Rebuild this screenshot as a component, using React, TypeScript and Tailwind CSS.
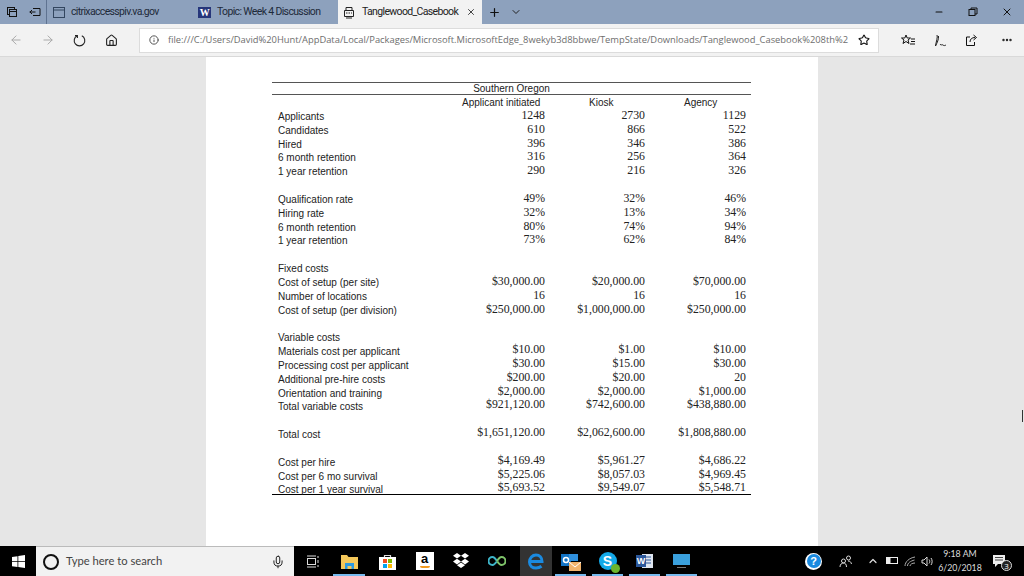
import { ArrowLeft, ArrowRight, Home, Info, Star, MoreHorizontal, Plus, ChevronDown, X, Minus, Mic, ChevronUp } from "lucide-react";
import type { ReactNode } from "react";

type Row = { label?: string; a?: string; b?: string; c?: string };

const rows: Row[] = [
  { label: "Applicants", a: "1248", b: "2730", c: "1129" },
  { label: "Candidates", a: "610", b: "866", c: "522" },
  { label: "Hired", a: "396", b: "346", c: "386" },
  { label: "6 month retention", a: "316", b: "256", c: "364" },
  { label: "1 year retention", a: "290", b: "216", c: "326" },
  {},
  { label: "Qualification rate", a: "49%", b: "32%", c: "46%" },
  { label: "Hiring rate", a: "32%", b: "13%", c: "34%" },
  { label: "6 month retention", a: "80%", b: "74%", c: "94%" },
  { label: "1 year retention", a: "73%", b: "62%", c: "84%" },
  {},
  { label: "Fixed costs" },
  { label: "Cost of setup (per site)", a: "$30,000.00", b: "$20,000.00", c: "$70,000.00" },
  { label: "Number of locations", a: "16", b: "16", c: "16" },
  { label: "Cost of setup (per division)", a: "$250,000.00", b: "$1,000,000.00", c: "$250,000.00" },
  {},
  { label: "Variable costs" },
  { label: "Materials cost per applicant", a: "$10.00", b: "$1.00", c: "$10.00" },
  { label: "Processing cost per applicant", a: "$30.00", b: "$15.00", c: "$30.00" },
  { label: "Additional pre-hire costs", a: "$200.00", b: "$20.00", c: "20" },
  { label: "Orientation and training", a: "$2,000.00", b: "$2,000.00", c: "$1,000.00" },
  { label: "Total variable costs", a: "$921,120.00", b: "$742,600.00", c: "$438,880.00" },
  {},
  { label: "Total cost", a: "$1,651,120.00", b: "$2,062,600.00", c: "$1,808,880.00" },
  {},
  { label: "Cost per hire", a: "$4,169.49", b: "$5,961.27", c: "$4,686.22" },
  { label: "Cost per 6 mo survival", a: "$5,225.06", b: "$8,057.03", c: "$4,969.45" },
  { label: "Cost per 1 year survival", a: "$5,693.52", b: "$9,549.07", c: "$5,548.71" },
];

function TabIcon() {
  return (
    <svg width="12" height="11" viewBox="0 0 12 11" fill="none" stroke="#33465f" strokeWidth="1">
      <rect x="0.5" y="0.5" width="11" height="10" />
      <path d="M0.5 3h11" />
    </svg>
  );
}

function TabBar() {
  return (
    <div className="flex h-6 items-center bg-[#8da1bd] font-['Roboto'] text-[10.5px] tracking-[-0.65px] whitespace-nowrap text-[#1e2a3a]">
      <div className="flex h-6 w-[47px] shrink-0 items-center border-r border-[#5f7391]">
        <svg className="ml-[6px]" width="12" height="12" viewBox="0 0 12 12" fill="none" stroke="#111" strokeWidth="1">
          <rect x="1.5" y="1.5" width="7" height="7" />
          <rect x="3.5" y="3.5" width="7" height="7" fill="#8da1bd" />
          <path d="M3.5 5.5h7" />
        </svg>
        <svg className="ml-[11px]" width="12" height="12" viewBox="0 0 12 12" fill="none" stroke="#111" strokeWidth="1">
          <path d="M4 2.5h7v7H4M0.5 6h6M3 4L1 6l2 2" />
        </svg>
      </div>
      <div className="flex w-[146px] shrink-0 items-center pl-[6px]">
        <TabIcon />
        <span className="ml-[6px]">citrixaccesspiv.va.gov</span>
      </div>
      <div className="flex w-[145px] shrink-0 items-center pl-[5px]">
        <span className="flex h-[11px] w-[13px] items-center justify-center bg-[#26367a] font-['Liberation_Serif'] text-[10px] font-bold text-white">W</span>
        <span className="ml-[6px]">Topic: Week 4 Discussion</span>
      </div>
      <div className="flex h-6 w-[144px] shrink-0 items-center bg-[#f2f2f2] pl-[5px] text-[#222]">
        <svg className="shrink-0" width="12" height="13" viewBox="0 0 12 13" fill="none" stroke="#222" strokeWidth="1">
          <path d="M3 4V1.500h6V4M1.500 4.500h9v6h-9zM3 12h6" />
          <path d="M3 7h1.500M5.500 7H7M8 7h1" />
        </svg>
        <span className="ml-[7px] w-[104px]">Tanglewood_Casebook</span>
        <X className="shrink-0" size={10} strokeWidth={1} absoluteStrokeWidth color="#444" />
      </div>
      <Plus className="ml-[6px]" size={13} strokeWidth={1.2} absoluteStrokeWidth color="#111" />
      <ChevronDown className="ml-[9px]" size={12} strokeWidth={1} absoluteStrokeWidth color="#222" />
      <div className="ml-auto flex items-center pr-[11px]">
        <Minus size={10} strokeWidth={1.2} absoluteStrokeWidth color="#111" />
        <svg className="ml-[24px]" width="10" height="10" viewBox="0 0 10 10" fill="none" stroke="#111" strokeWidth="1">
          <rect x="1" y="2.500" width="6" height="6" />
          <path d="M3 2.500V1h6v6H7" />
        </svg>
        <X className="ml-[23px]" size={12} strokeWidth={1} absoluteStrokeWidth color="#111" />
      </div>
    </div>
  );
}

function ToolBar() {
  return (
    <div className="flex h-[33px] items-center border-b border-[#d9d9d9] bg-[#f2f2f2]">
      <ArrowLeft className="ml-[9px]" size={14} strokeWidth={1} absoluteStrokeWidth color="#aaa" />
      <ArrowRight className="ml-[18px]" size={14} strokeWidth={1} absoluteStrokeWidth color="#aaa" />
      <svg className="ml-[18px]" width="13" height="13" viewBox="0 0 13 13" fill="none" stroke="#222" strokeWidth="1.100">
        <path d="M4.200 1.800a5.300 5.300 0 1 0 4.600 0M2 1.500h2.400v2.400" />
      </svg>
      <Home className="ml-[19px]" size={13} strokeWidth={1.1} absoluteStrokeWidth color="#222" />
      <div className="ml-[21px] flex h-[25px] w-[740px] items-center border border-[#dcdcdc] bg-white pl-[9px]">
        <Info size={10} strokeWidth={1} absoluteStrokeWidth color="#555" />
        <span className="ml-[9px] w-[681px] font-['Open_Sans'] text-[9.35px] whitespace-nowrap text-[#6e6e6e]">
          file:///C:/Users/David%20Hunt/AppData/Local/Packages/Microsoft.MicrosoftEdge_8wekyb3d8bbwe/TempState/Downloads/Tanglewood_Casebook%208th%2
        </span>
        <Star className="ml-[9px]" size={12} strokeWidth={1.1} absoluteStrokeWidth color="#111" />
      </div>
      <svg className="ml-[22px]" width="14" height="12" viewBox="0 0 14 12" fill="none" stroke="#111" strokeWidth="1">
        <path d="M5 1l1.200 3H9.500L7 6l1 3.500L5 7.500 2 9.500 3 6 .5 4h3.300zM10 5h4M10 7.500h4M9 10h5" />
      </svg>
      <svg className="ml-[19px]" width="13" height="13" viewBox="0 0 13 13" fill="none" stroke="#222" strokeWidth="1">
        <path d="M3 1C4 3 2 8 1.500 12 3 9 5 5 4.500 2M6 10c1 2 2 0 3 1s2 .5 3 0" />
      </svg>
      <svg className="ml-[18px]" width="13" height="13" viewBox="0 0 13 13" fill="none" stroke="#111" strokeWidth="1">
        <path d="M5 3H1.500v8.500h8V8M5 8c0-3 2-4.500 5-4.500M8.500 1l3 2.500-3 2.500" />
      </svg>
      <MoreHorizontal className="ml-[23px]" size={12} strokeWidth={1.4} absoluteStrokeWidth color="#222" />
    </div>
  );
}

function Document() {
  const num = "text-right font-['Liberation_Serif'] text-[11.8px] leading-[14px] text-[#222]";
  return (
    <div className="flex h-[489px] justify-center overflow-hidden bg-[#e6e6e6]">
      <div className="w-[612px] bg-white pt-[25px] pl-[66px] font-['Liberation_Sans'] text-[10px] text-[#222]">
        <div className="w-[479px]">
          <div className="h-[13px] border-t border-b border-[#555] text-center leading-[12px]">Southern Oregon</div>
          <div className="flex h-[14px] leading-[15px]">
            <div className="w-[317px] pl-[190px]">Applicant initiated</div>
            <div className="w-[95px]">Kiosk</div>
            <div>Agency</div>
          </div>
          <div className="h-[386px] border-b border-black">
            {rows.map((r, i) => (
              <div key={i} className="grid h-[13.84px] grid-cols-[172px_101px_100px_101px] items-center">
                <div className="translate-y-[1px] pl-[6px] leading-[14px] whitespace-nowrap">{r.label}</div>
                <div className={`${num} ${i > 16 ? "-translate-y-[2px]" : "-translate-y-[1px]"}`}>{r.a}</div>
                <div className={`${num} ${i > 16 ? "-translate-y-[2px]" : "-translate-y-[1px]"}`}>{r.b}</div>
                <div className={`${num} ${i > 16 ? "-translate-y-[2px]" : "-translate-y-[1px]"}`}>{r.c}</div>
              </div>
            ))}
          </div>
        </div>
      </div>
    </div>
  );
}

function Slot({ className, active, children }: { className: string; active?: boolean; children: ReactNode }) {
  return (
    <div className={`relative flex h-[30px] shrink-0 items-center justify-center ${className}`}>
      {children}
      {active && <div className="absolute right-[3px] bottom-0 left-[3px] h-[2px] bg-[#76b9ed]" />}
    </div>
  );
}

function TaskBar() {
  return (
    <div className="flex h-[30px] items-center bg-black">
      <div className="flex w-[36px] justify-center">
        <svg width="13" height="13" viewBox="0 0 13 13" fill="#fff">
          <path d="M0 2l5.500-.8v5H0zM6.300 1.100L13 0v6.200H6.300zM0 7h5.500v5L0 11.200zM6.300 7H13v6l-6.700-1z" />
        </svg>
      </div>
      <div className="flex h-[30px] w-[258px] items-center border-t border-[#bbb] bg-[#f2f2f2]">
        <div className="ml-[7px] h-[16px] w-[16px] rounded-full border-[2px] border-[#111]" />
        <span className="ml-[7px] font-['Lato'] text-[11.2px] text-[#444]">Type here to search</span>
        <Mic className="mr-[9px] ml-auto" size={14} strokeWidth={1} absoluteStrokeWidth color="#222" />
      </div>
      <Slot className="w-[36px]">
        <svg width="13" height="13" viewBox="0 0 13 13" fill="none" stroke="#ddd" strokeWidth="1">
          <rect x="1.500" y="3.500" width="8" height="6" />
          <path d="M1 1h9M1 12h9M12 1v2M12 5v3M12 10v2" />
        </svg>
      </Slot>
      <Slot className="w-[38px]" active>
        <svg width="17" height="15" viewBox="0 0 17 15">
          <path d="M0 1h6l1.500 2H17v12H0z" fill="#f5c85a" />
          <path d="M4 9h9v6h-2.500v-3h-4v3H4z" fill="#2f9be0" />
        </svg>
      </Slot>
      <Slot className="w-[39px]">
        <svg width="17" height="17" viewBox="0 0 17 17">
          <path d="M5.500 4V2.500h6V4" fill="none" stroke="#ddd" strokeWidth="1.200" />
          <rect y="4" width="17" height="13" fill="#fff" />
          <rect x="4" y="6" width="4" height="4" fill="#f25022" />
          <rect x="9" y="6" width="4" height="4" fill="#7fba00" />
          <rect x="4" y="11" width="4" height="4" fill="#00a4ef" />
          <rect x="9" y="11" width="4" height="4" fill="#ffb900" />
        </svg>
      </Slot>
      <Slot className="w-[35px]">
        <div className="relative flex h-[18px] w-[18px] items-start justify-center bg-white font-['Liberation_Sans'] text-[13px] leading-[14px] font-bold text-black">
          a
          <div className="absolute bottom-[2px] left-[4px] h-[2px] w-[10px] rounded-b-full bg-[#f29a1f]" />
        </div>
      </Slot>
      <Slot className="w-[38px]">
        <svg width="18" height="16" viewBox="0 0 18 16" fill="#fff">
          <path d="M5 0l4 2.800L5 5.600 1 2.800zM13 0l4 2.800-4 2.800-4-2.800zM5 5.800l4 2.800-4 2.800-4-2.800zM13 5.800l4 2.800-4 2.800-4-2.800zM5 12.200l4-2.600 4 2.600-4 2.800z" />
        </svg>
      </Slot>
      <Slot className="w-[34px]">
        <svg width="18" height="10" viewBox="0 0 18 10" fill="none" strokeWidth="2">
          <path d="M9 5C7 2 6 1 4.500 1a4 4 0 000 8C6 9 7 8 9 5" stroke="#3eb5c9" />
          <path d="M9 5c2-3 3-4 4.500-4a4 4 0 010 8C12 9 11 8 9 5" stroke="#7fc46a" />
        </svg>
      </Slot>
      <Slot className="ml-[6px] w-[32px] bg-[#333]">
        <svg width="16" height="17" viewBox="0 0 16 17" fill="none">
          <path d="M2 8.500h12c0-4-2.500-6.500-6-6.500S1.500 5 1.500 9 4.500 15 8 15c2.200 0 4-.6 5.500-1.700" stroke="#1a8ae0" strokeWidth="3" />
        </svg>
      </Slot>
      <Slot className="w-[37px]" active>
        <svg width="20" height="19" viewBox="0 0 20 19">
          <rect y="2" width="10" height="12" fill="#1273c4" />
          <rect x="8" y="2" width="9" height="7" fill="#2f8fdc" />
          <path d="M8 10h12v9H8z" fill="#f1b36c" />
          <path d="M8 10l6 5 6-5" fill="none" stroke="#fff" strokeWidth="1" />
          <circle cx="5" cy="8" r="2.500" fill="none" stroke="#fff" strokeWidth="1.500" />
        </svg>
      </Slot>
      <Slot className="w-[37px]" active>
        <div className="relative h-[18px] w-[18px] rounded-full bg-[#13a9e8] text-center font-['Liberation_Sans'] text-[14px] leading-[18px] font-bold text-white">
          S
          <div className="absolute -right-[3px] -bottom-[3px] h-[9px] w-[9px] rounded-full bg-[#6cb52d]" />
        </div>
      </Slot>
      <Slot className="w-[37px]" active>
        <svg width="17" height="16" viewBox="0 0 17 16">
          <rect x="6" y="1" width="11" height="14" fill="#dfe6f0" />
          <path d="M9 4h6M9 7h6M9 10h6" stroke="#2b579a" strokeWidth="1" />
          <rect y="2" width="10" height="12" fill="#2b579a" />
          <text x="5" y="11" textAnchor="middle" fontSize="9" fontWeight="700" fill="#fff" fontFamily="Liberation Sans">W</text>
        </svg>
      </Slot>
      <Slot className="w-[37px]" active>
        <svg width="17" height="15" viewBox="0 0 17 15">
          <rect width="17" height="11" fill="#3aa0dd" />
          <rect x="4" y="13" width="9" height="1" fill="#777" />
        </svg>
      </Slot>
      <div className="ml-[105px] flex h-[17px] w-[17px] shrink-0 items-center justify-center rounded-full bg-white">
        <span className="flex h-[14px] w-[14px] items-center justify-center rounded-full bg-[#1a8ae0] font-['Liberation_Sans'] text-[11px] font-bold text-white">?</span>
      </div>
      <svg className="ml-[17px] shrink-0" width="13" height="13" viewBox="0 0 13 13" fill="none" stroke="#ddd" strokeWidth="1">
        <circle cx="4.500" cy="6" r="2" />
        <circle cx="9.500" cy="3" r="2" />
        <path d="M1 12c0-3 2-4 3.500-4s3 1 3 4M9 6c2 0 3 1 3.500 3" />
      </svg>
      <ChevronUp className="ml-[15px] shrink-0" size={12} strokeWidth={1.2} absoluteStrokeWidth color="#ddd" />
      <svg className="ml-[7px] shrink-0" width="12" height="8" viewBox="0 0 12 8" fill="none" stroke="#eee" strokeWidth="1">
        <rect x=".5" y=".5" width="11" height="6" />
        <rect x="1" y="1" width="3" height="5" fill="#eee" />
      </svg>
      <svg className="ml-[6px] shrink-0" width="12" height="11" viewBox="0 0 12 11" fill="none" stroke="#aaa" strokeWidth="1">
        <path d="M1 10c0-4 4-8 10-9M3.500 10c0-3 3-5 7-6M6 10c0-1.500 2-3 5-3" />
      </svg>
      <svg className="ml-[5px] shrink-0" width="13" height="11" viewBox="0 0 13 11" fill="none" stroke="#ddd" strokeWidth="1">
        <path d="M1 4h2l3-3v9L3 7H1zM8 3.500c1 1 1 3 0 4M10 2c1.500 2 1.500 5 0 7" />
      </svg>
      <div className="ml-[3px] w-[46px] shrink-0 text-center font-['Lato'] text-[8.8px] leading-[14px] text-[#ddd]">
        <div>9:18 AM</div>
        <div>6/20/2018</div>
      </div>
      <div className="relative ml-[9px] shrink-0">
        <svg className="block" width="14" height="14" viewBox="0 0 14 14" fill="#eee">
          <path d="M1 1h12v9H6l-3 3v-3H1z" />
          <path d="M3 3.500h8M3 6h8" stroke="#444" strokeWidth="1" />
        </svg>
        <span className="absolute -right-[6px] -bottom-[3px] flex h-[11px] w-[11px] items-center justify-center rounded-full border border-[#ddd] bg-[#222] font-['Open_Sans'] text-[8px] leading-none text-white">
          3
        </span>
      </div>
    </div>
  );
}

export default function App() {
  return (
    <div className="relative h-[576px] w-[1024px] overflow-hidden font-['Open_Sans',sans-serif]">
      <TabBar />
      <ToolBar />
      <Document />
      <TaskBar />
      {/* text cursor left on the right edge */}
      <div className="absolute top-[410px] left-[1022px] h-[12px] w-[1px] bg-[#333]" />
    </div>
  );
}
